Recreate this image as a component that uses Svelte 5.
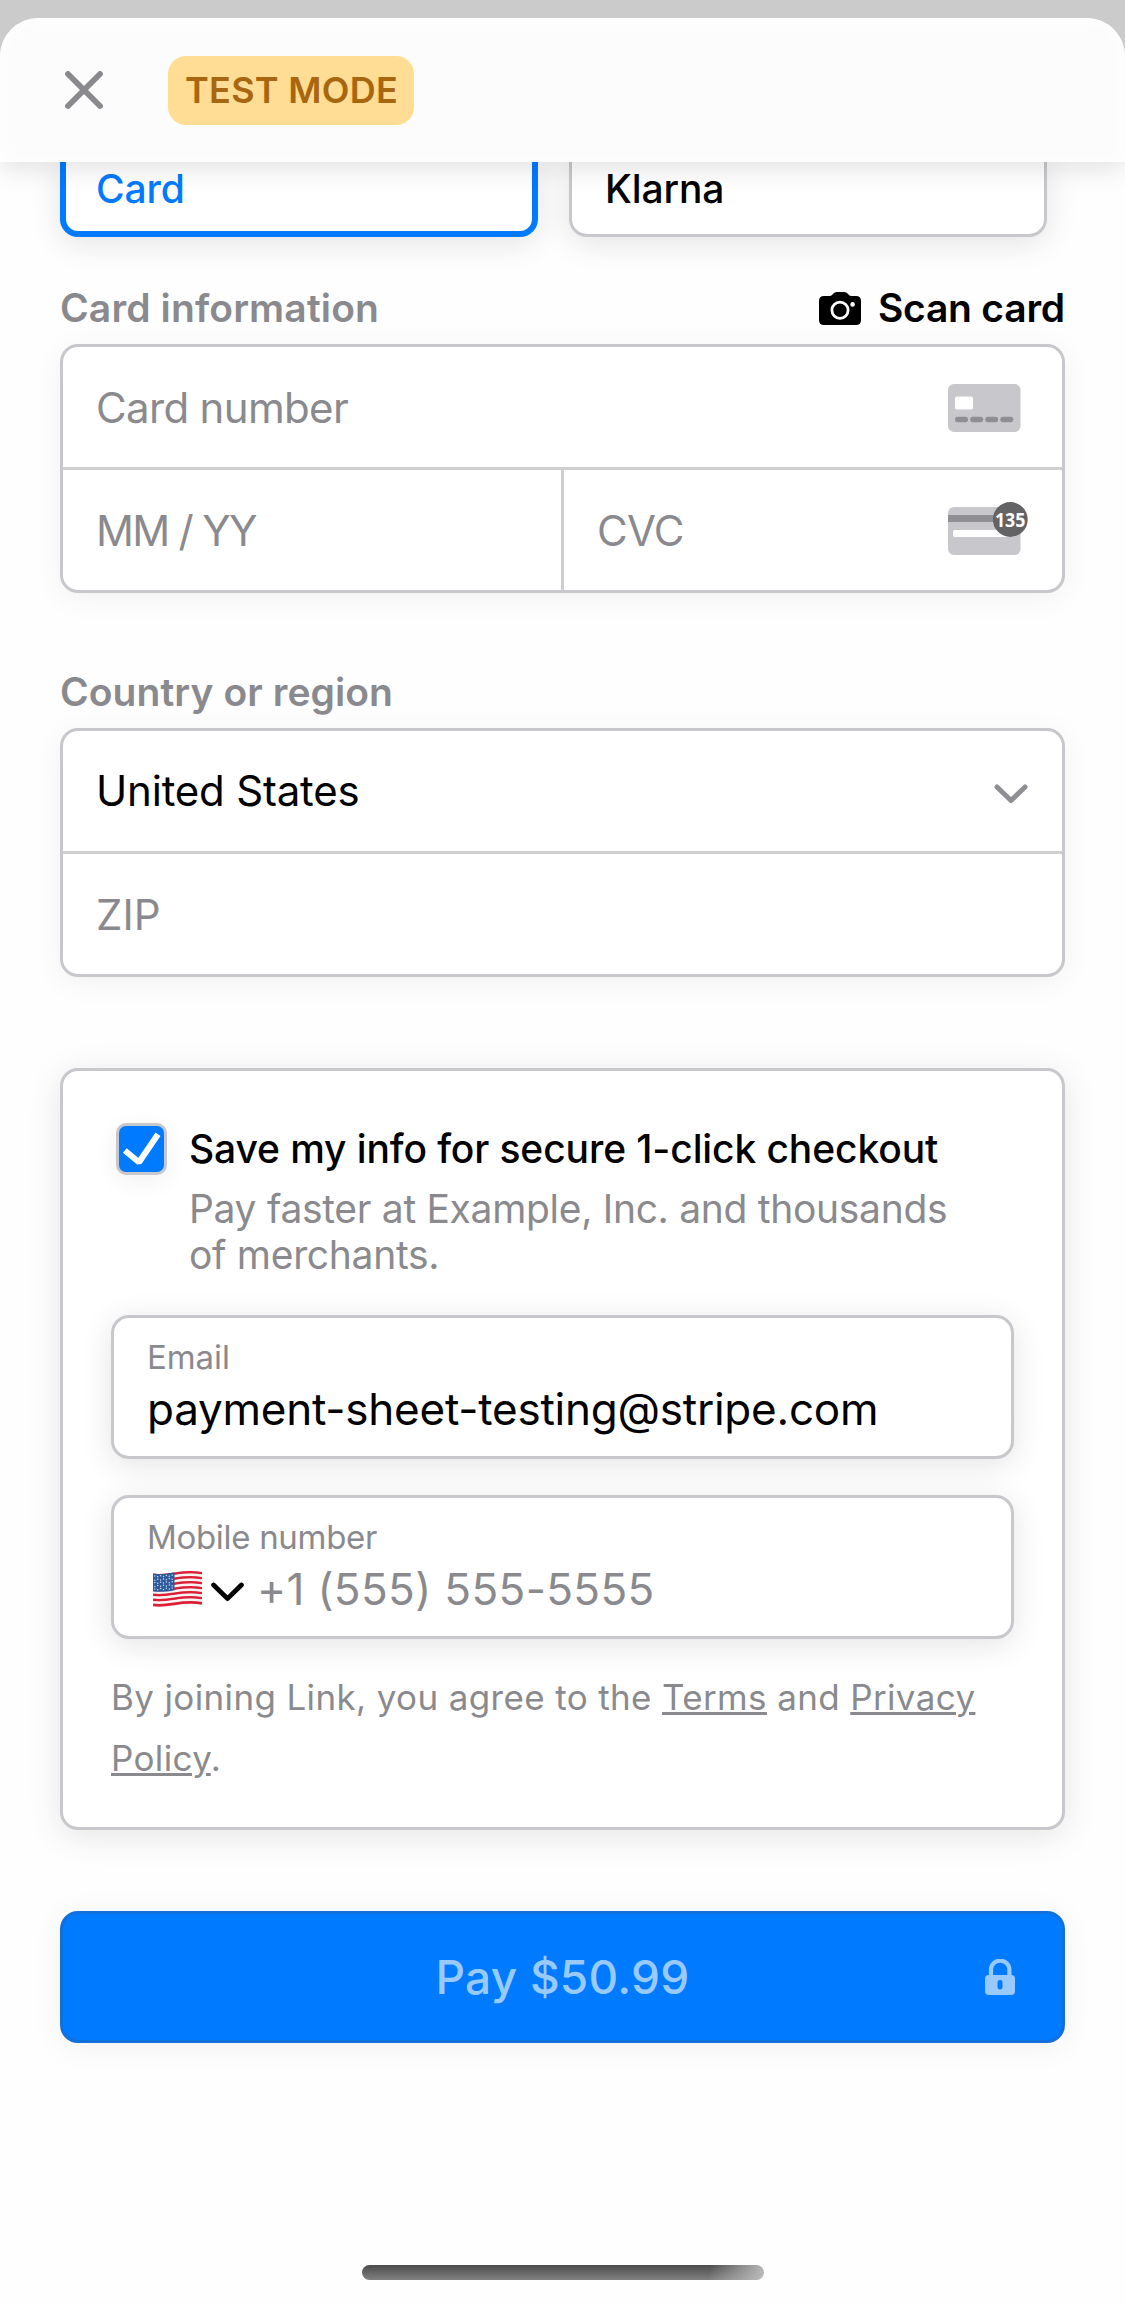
<script>
  const stripes = Array.from({ length: 13 }, (_, i) => ({
    y: i * 2.5,
    color: i % 2 === 0 ? '#dc1f35' : '#f7f3f3'
  }));
  const stars = Array.from({ length: 35 }, (_, i) => ({
    x: 1.8 + (i % 7) * 2.9,
    y: 5.2 + Math.floor(i / 7) * 3.2 + (i % 2) * 0.9
  }));
</script>

<main class="sheet">
  <header class="topbar">
    <button class="close" aria-label="Close">
      <svg width="38" height="38" viewBox="0 0 38 38" fill="none" stroke="#8a8a8e" stroke-width="5.8" stroke-linecap="round">
        <path d="M3 3 35 35M35 3 3 35" />
      </svg>
    </button>
    <span class="badge">TEST MODE</span>
  </header>

  <div class="content">
    <div class="tabs">
      <div class="tab selected">Card</div>
      <div class="tab">Klarna</div>
    </div>

    <div class="heading first">
      <span class="label">Card information</span>
      <span class="scan">
        <svg width="42" height="33" viewBox="0 0 42 33">
          <path d="M5 4H11Q12.5 4 13.5 2.6Q15 0 17.5 0H25.5Q28 0 29.5 2.6Q30.5 4 32 4H37Q42 4 42 9V28Q42 33 37 33H5Q0 33 0 28V9Q0 4 5 4Z" fill="#000" />
          <circle cx="21" cy="18.3" r="8.1" fill="none" stroke="#fff" stroke-width="2.8" />
          <circle cx="33.6" cy="12.4" r="2.3" fill="#fff" />
        </svg>
        <span>Scan card</span>
      </span>
    </div>
    <div class="group">
      <div class="row">
        <span class="ph number">Card number</span>
        <svg class="brand" width="73" height="50" viewBox="0 0 73 50">
          <rect y="2" width="72.5" height="48" rx="6" fill="#c7c7cc" />
          <rect x="7" y="14.5" width="18" height="13" rx="1.8" fill="#fff" />
          <rect x="7" y="34.8" width="13" height="5.4" rx="2.7" fill="#8e8e93" />
          <rect x="22.2" y="34.8" width="13" height="5.4" rx="2.7" fill="#8e8e93" />
          <rect x="37.2" y="34.8" width="13" height="5.4" rx="2.7" fill="#8e8e93" />
          <rect x="52.3" y="34.8" width="13" height="5.4" rx="2.7" fill="#8e8e93" />
        </svg>
      </div>
      <div class="row split">
        <div class="cell"><span class="ph expiry">MM / YY</span></div>
        <div class="cell">
          <span class="ph cvc">CVC</span>
          <svg class="cvc-icon" width="80" height="58" viewBox="0 0 80 58">
            <rect y="6" width="72.5" height="48" rx="6" fill="#c7c7cc" />
            <rect y="14" width="60" height="7" fill="#8e8e93" />
            <rect x="5" y="29" width="62" height="7" rx="1.8" fill="#fff" />
            <circle cx="62.3" cy="18.5" r="17.4" fill="#636366" />
            <text x="46.9" y="26" textLength="30.5" lengthAdjust="spacingAndGlyphs" class="digits">135</text>
          </svg>
        </div>
      </div>
    </div>

    <div class="heading second"><span class="label country">Country or region</span></div>
    <div class="group">
      <div class="row">
        <span class="value">United States</span>
        <svg class="chevron" width="34" height="20" viewBox="0 0 34 20" fill="none" stroke="#8e8e93" stroke-width="5" stroke-linecap="round" stroke-linejoin="round">
          <path d="M3 3 17 16.5 31 3" />
        </svg>
      </div>
      <div class="row"><span class="ph">ZIP</span></div>
    </div>

    <section class="save">
      <div class="consent">
        <span class="check">
          <svg width="44" height="46" viewBox="0 0 44 46" fill="none" stroke="#fff" stroke-width="6" stroke-linejoin="bevel">
            <path d="M5.8 24.5 20 36.2 39 8.2" />
          </svg>
        </span>
        <div>
          <div class="title">Save my info for secure 1-click checkout</div>
          <div class="sub">Pay faster at Example, Inc. and thousands of merchants.</div>
        </div>
      </div>

      <div class="input">
        <div class="caption">Email</div>
        <div class="entry email">payment-sheet-testing@stripe.com</div>
      </div>

      <div class="input">
        <div class="caption mobile">Mobile number</div>
        <div class="entry phone">
          <svg class="flag" width="49" height="36" viewBox="0 0 49 36">
            <defs>
              <clipPath id="cloth"><rect width="49" height="36" rx="1" /></clipPath>
            </defs>
            <g clip-path="url(#cloth)">
              {#each stripes as s}
                <path d="M0 3.9C17 6.4 28 -1.6 49 2.4" transform="translate(0 {s.y})" fill="none" stroke={s.color} stroke-width="2.7" />
              {/each}
              <path d="M0 2.6C9 4 15 2.6 21.5 1.3V19.2C15 20.5 8 21.4 0 20.4Z" fill="#2d5a9e" />
              {#each stars as p}
                <circle cx={p.x} cy={p.y - p.x * 0.05} r=".75" fill="#c9d8ee" />
              {/each}
            </g>
          </svg>
          <svg class="dial-chevron" width="33" height="20" viewBox="0 0 33 20" fill="none" stroke="#000" stroke-width="4.8" stroke-linecap="round" stroke-linejoin="round">
            <path d="M2.6 3 16.5 16.6 30.4 3" />
          </svg>
          <span class="dial">+1 (555) 555-5555</span>
        </div>
      </div>

      <p class="legal">By joining Link, you agree to the <u>Terms</u> and <u>Privacy Policy</u>.</p>
    </section>

    <button class="pay">
      <span>Pay $50.99</span>
      <svg class="lock" width="30" height="36" viewBox="0 0 30 36">
        <path d="M6 18V10.5A9 8.6 0 0 1 24.4 10.5V18" fill="none" stroke="#99caff" stroke-width="4.2" />
        <path fill-rule="evenodd" fill="#99caff" d="M3.5 16H26.5Q30 16 30 19.5V32Q30 36 26 36H4Q0 36 0 32V19.5Q0 16 3.5 16ZM15 21Q12.5 21 12.5 24V27.4Q12.5 30.4 15 30.4T17.5 27.4V24Q17.5 21 15 21Z" />
      </svg>
    </button>
  </div>

  <div class="home"></div>
</main>

<style>
  :global(body) {
    margin: 0;
    background: #cbcbcb;
  }
  .sheet {
    box-sizing: border-box;
    width: 1125px;
    height: 2286px;
    margin-top: 18px;
    background: #fefefe;
    border-radius: 38px 38px 0 0;
    font-family: Inter, 'Liberation Sans', sans-serif;
    color: #000;
    display: flow-root;
    overflow: hidden;
  }
  button {
    font: inherit;
    border: 0;
    padding: 0;
    background: none;
  }
  svg {
    display: block;
    flex: none;
  }
  .topbar {
    position: relative;
    z-index: 1;
    box-sizing: border-box;
    height: 144px;
    padding: 38px 0 0 65px;
    display: flex;
    align-items: flex-start;
    gap: 65px;
    background: #fcfcfc;
    border-radius: 38px 38px 0 0;
    box-shadow: 0 6px 28px rgba(0, 0, 0, 0.12), inset 0 0 20px #fff;
  }
  .close {
    margin-top: 15px;
  }
  .badge {
    box-sizing: border-box;
    width: 246px;
    height: 69px;
    border-radius: 18px;
    background: #ffdd94;
    color: #a7660f;
    font-size: 36px;
    font-weight: 600;
    letter-spacing: 0.29px;
    line-height: 69px;
    padding-left: 17px;
  }
  .content {
    padding: 0 60px;
  }
  .tabs {
    display: flex;
    gap: 31px;
  }
  .tab {
    box-sizing: border-box;
    width: 478px;
    height: 75px;
    border: 3px solid #c7c7cc;
    border-top: 0;
    border-radius: 0 0 18px 18px;
    padding: 0 33px;
    background: #fff;
    font-size: 39px;
    font-weight: 500;
    line-height: 54px;
    letter-spacing: -0.1px;
    box-shadow: 0 6px 32px rgba(0, 0, 0, 0.11);
  }
  .tab.selected {
    border-color: #007aff;
    border-width: 0 6px 6px;
    padding: 0 30px;
    color: #007aff;
  }
  .heading {
    display: flex;
    justify-content: space-between;
    align-items: center;
    height: 48px;
    margin-bottom: 12px;
    font-size: 39px;
    font-weight: 600;
    line-height: 48px;
  }
  .first {
    margin-top: 47px;
  }
  .second {
    margin-top: 75px;
  }
  .label {
    color: #8a8a8e;
    letter-spacing: 0.13px;
  }
  .country {
    letter-spacing: 0.07px;
  }
  .scan {
    display: flex;
    align-items: center;
    gap: 17px;
    letter-spacing: -0.21px;
  }
  .group {
    border: 3px solid #c7c7cc;
    border-radius: 18px;
    background: #fff;
    box-shadow: 0 5px 30px rgba(0, 0, 0, 0.055);
    font-size: 42px;
  }
  .row {
    display: flex;
    align-items: center;
    justify-content: space-between;
    height: 120px;
    padding-left: 33px;
  }
  .row + .row {
    border-top: 3px solid #cecece;
  }
  .row.split {
    padding: 0;
    display: grid;
    grid-template-columns: 498px 1fr;
  }
  .cell {
    display: flex;
    align-items: center;
    justify-content: space-between;
    height: 120px;
    padding-left: 33px;
  }
  .cell + .cell {
    border-left: 3px solid #cecece;
    padding-left: 33px;
  }
  .ph {
    color: #8a8a8e;
  }
  .number {
    letter-spacing: -0.66px;
  }
  .expiry {
    letter-spacing: -1.69px;
  }
  .cvc {
    letter-spacing: -0.8px;
  }
  .value {
    letter-spacing: -0.2px;
    padding-bottom: 1px;
  }
  .brand {
    margin-right: 41px;
  }
  .cvc-icon {
    margin-right: 34px;
  }
  .digits {
    font: 700 20px 'Noto Sans', sans-serif;
    fill: #fff;
  }
  .chevron {
    margin: 5px 34px 0 0;
  }
  .save {
    box-sizing: border-box;
    height: 762px;
    margin-top: 91px;
    padding: 52px 48px 0;
    border: 3px solid #c7c7cc;
    border-radius: 18px;
    background: #fff;
    box-shadow: 0 6px 34px rgba(0, 0, 0, 0.1);
  }
  .consent {
    display: flex;
    gap: 22px;
    padding: 0 50px 0 5px;
    margin-bottom: 37px;
  }
  .check {
    box-sizing: border-box;
    flex: none;
    width: 51px;
    height: 52px;
    border: 3px solid #c7c7cc;
    border-radius: 10px;
    background: #007aff;
    box-shadow: 0 6px 24px rgba(0, 0, 0, 0.06);
  }
  .title {
    font-size: 39px;
    font-weight: 500;
    line-height: 52px;
    letter-spacing: -0.11px;
    margin-bottom: 11px;
    white-space: nowrap;
  }
  .sub {
    font-size: 39px;
    line-height: 46px;
    letter-spacing: -0.31px;
    color: #8a8a8e;
  }
  .input {
    box-sizing: border-box;
    height: 144px;
    border: 3px solid #c7c7cc;
    border-radius: 18px;
    padding: 19px 32px 0 33px;
    background: #fff;
    box-shadow: 0 6px 32px rgba(0, 0, 0, 0.11);
  }
  .input + .input {
    margin-top: 36px;
  }
  .caption {
    font-size: 33px;
    line-height: 40px;
    letter-spacing: -0.07px;
    margin-bottom: 4px;
    color: #8a8a8e;
  }
  .mobile {
    letter-spacing: -0.31px;
  }
  .entry {
    font-size: 44px;
    line-height: 56px;
  }
  .email {
    letter-spacing: -0.23px;
  }
  .phone {
    display: flex;
    align-items: center;
    color: #8a8a8e;
    letter-spacing: 0.36px;
  }
  .flag {
    margin-left: 6px;
  }
  .dial-chevron {
    margin: 5px 13px 0 9px;
  }
  .legal {
    margin: 28px -20px 0 0;
    font-size: 35px;
    line-height: 61px;
    letter-spacing: 0.36px;
    color: #8a8a8e;
  }
  u {
    text-decoration-thickness: 3px;
    text-underline-offset: 2px;
  }
  .pay {
    box-sizing: border-box;
    display: grid;
    grid-template-columns: 1fr auto 1fr;
    align-items: center;
    width: 1005px;
    height: 132px;
    margin-top: 81px;
    padding-right: 47px;
    padding-left: 47px;
    border: 3px solid #1170dc;
    border-radius: 18px;
    background: #007aff;
    color: #99caff;
    font-size: 46px;
    font-weight: 500;
    letter-spacing: 0.25px;
    box-shadow: 0 4px 32px rgba(0, 0, 0, 0.06);
  }
  .pay span {
    grid-column: 2;
  }
  .lock {
    justify-self: end;
  }
  .home {
    width: 402px;
    height: 15px;
    margin: 222px auto 0;
    border-radius: 8px;
    background: linear-gradient(100deg, transparent 86%, #bbb 100%), linear-gradient(#4c4c4c, #808080);
  }
</style>
